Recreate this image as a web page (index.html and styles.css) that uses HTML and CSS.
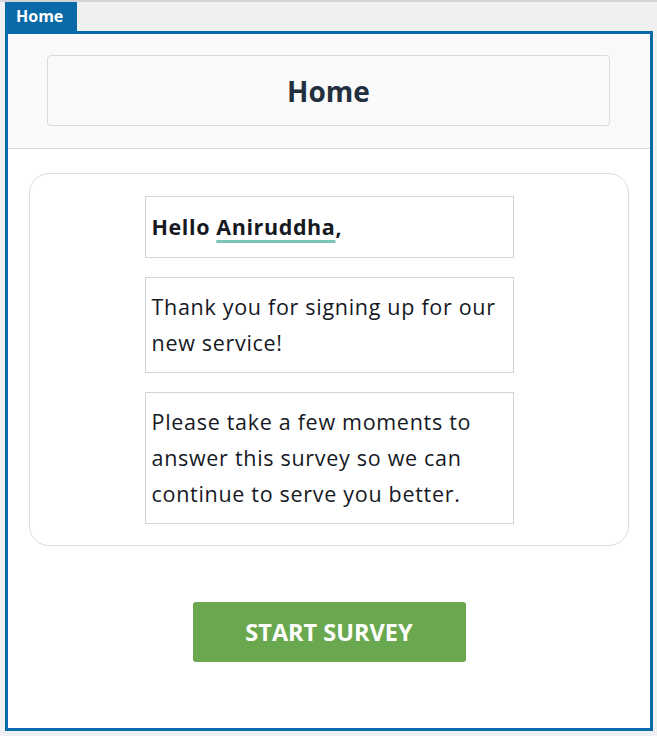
FILE: index.html
```html
<!DOCTYPE html>
<html lang="en">
<head>
  <meta charset="UTF-8" />
  <meta name="viewport" content="width=device-width, initial-scale=1.0"/>
  <title>Home</title>
  <link rel="stylesheet" href="styles.css">
</head>
<body>
  <div class="tabs">
    <div class="tab">Home</div>
  </div>
  <div class="frame">
    <div class="header">
      <div class="title-box">
        <h1>Home</h1>
      </div>
    </div>
    <div class="card">
      <div class="msg greeting">Hello <span class="name">Aniruddha</span>,</div>
      <div class="msg">Thank you for signing up for our new service!</div>
      <div class="msg">Please take a few moments to answer this survey so we can continue to serve you better.</div>
    </div>
    <div class="actions">
      <button type="button">START SURVEY</button>
    </div>
  </div>
</body>
</html>
```

FILE: styles.css
```css
/* Base */
* { box-sizing: border-box; margin: 0; padding: 0; }
body { font-family: 'Open Sans', 'Noto Sans', sans-serif; background: #eff0f2; color: #16191f; border-top: 2px solid #d3d4d6; width: 657px; height: 736px; overflow: hidden; }

/* Tab strip */
.tabs { display: flex; padding-left: 5px; height: 29px; }
.tab { background: #0a6aa8; color: #fff; font-weight: 700; font-size: 16px; padding: 0 11px; line-height: 29px; width: 72px; }

/* Frame */
.frame { margin-left: 5px; width: 648px; height: 700px; border: 3px solid #0a6aa8; background: #fff; display: flex; flex-direction: column; }
.header { background: #f9f9f9; border-bottom: 1px solid #d5dbdb; padding: 21px 40px 22px 39px; }
.title-box { border: 1px solid #d5dbdb; border-radius: 4px; height: 71px; display: flex; align-items: center; justify-content: center; background: #fafafa; }
.title-box h1 { font-size: 28px; font-weight: 700; color: #232f3e; }

/* Card */
.card { margin: 24px 21px 0; border: 1px solid #dcdcdc; border-radius: 20px; padding: 22px 0 21px; display: flex; flex-direction: column; align-items: center; gap: 19px; }
.msg { width: 369px; border: 1px solid #d0d4d4; padding: 11px 6px; font-size: 21.5px; letter-spacing: 0.7px; line-height: 36px; color: #16191f; }
.greeting { font-weight: 700; padding: 12px 6px; letter-spacing: 0.6px; }
.name { text-decoration: underline; text-decoration-color: #7cc4b8; text-decoration-thickness: 3px; text-underline-offset: 5px; }

/* Action */
.actions { display: flex; justify-content: center; padding-top: 56px; }
button { background: #6aa84f; color: #fff; border: none; border-radius: 3px; width: 273px; height: 60px; font-family: inherit; font-size: 23.5px; font-weight: 700; cursor: pointer; }
button:hover { background: #5e9946; }
```
